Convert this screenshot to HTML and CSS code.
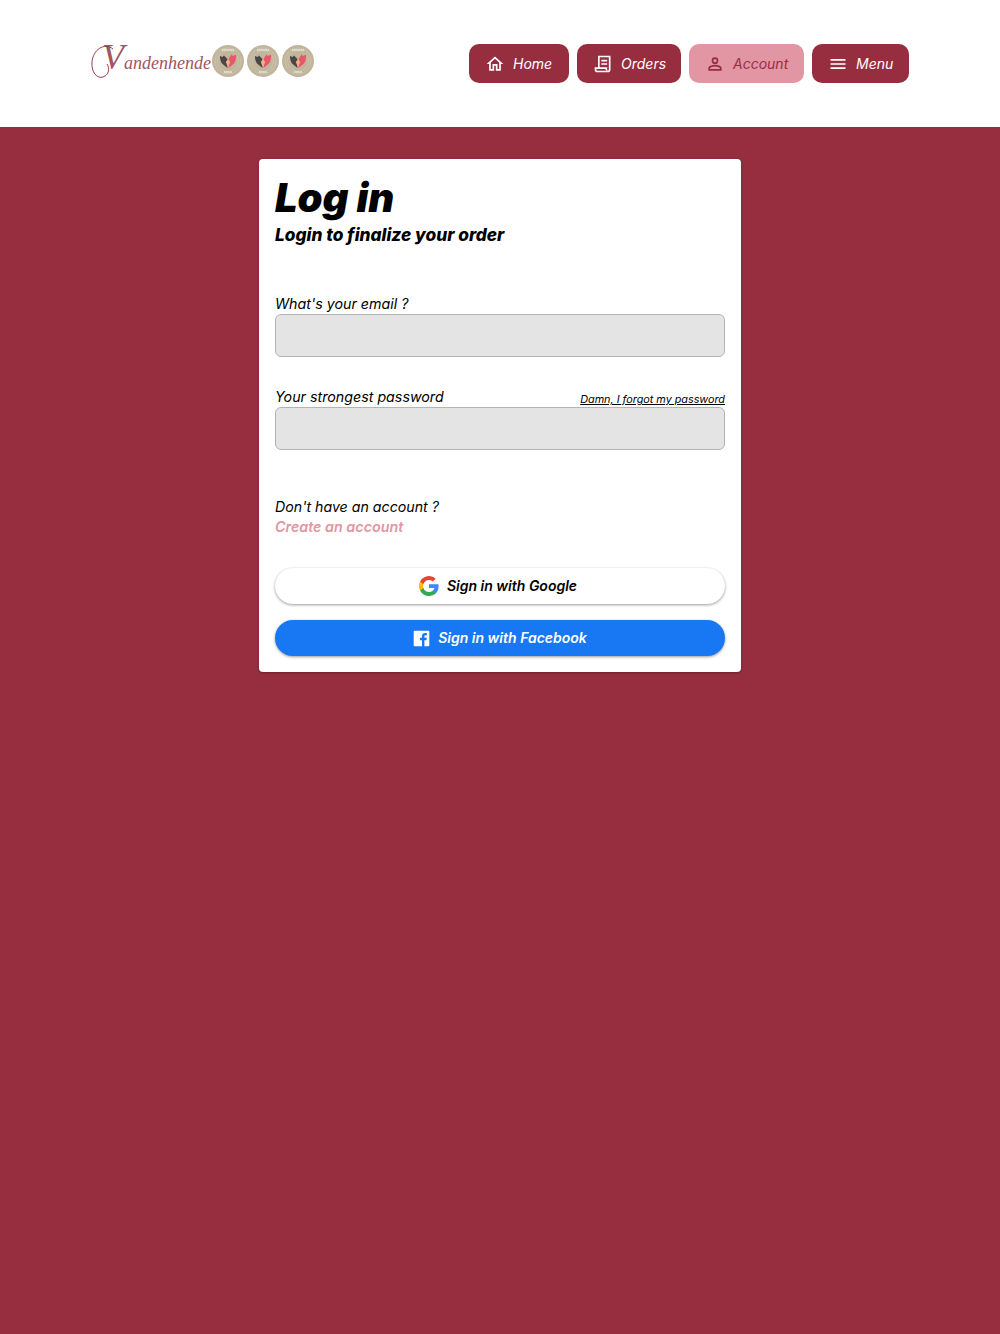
FILE: index.html
```html
<!DOCTYPE html>
<html lang="en">

<head>
    <meta charset="UTF-8">
    <meta name="viewport" content="width=device-width, initial-scale=1.0">
    <title>Log in - Vandenhende</title>
    <link rel="stylesheet" href="styles.css">
</head>

<body>

    <svg class="defs">
        <defs>
            <symbol id="seal" viewBox="0 0 32 32">
                <circle cx="16" cy="16" r="16" fill="#c1b59c" />
                <circle cx="16" cy="16" r="13" fill="none" stroke="#d0c7b2" stroke-width=".7" />
                <circle cx="16" cy="16" r="10.500" fill="none" stroke="#d0c7b2" stroke-width=".7" />
                <path d="M10 5h12M12 27h8" stroke="#e6e0d3" stroke-width="2" stroke-dasharray="1.500 .6" />
                <path d="M15.500 23 10 18.500C8.500 16.500 8 13.500 8 11l2.500 1 1.500-1.500 3.500 3.500z" fill="#4a4648" />
                <path d="M16.500 23 22 18.500C23.500 16.500 24.500 12.500 24 9.500l-3 1.500-1.500-1.500-3 4.500z" fill="#e8586b" />
                <path d="M16 22.500 13.800 17 16 14l2.200 3z" fill="#efb27d" />
            </symbol>
        </defs>
    </svg>

    <header class="top-bar">
        <a class="logo" href="#">
            <svg class="logo-swash" viewBox="0 0 40 36">
                <path d="M22 5C13-2 2 6 1 18c-1 10 5 17 11 15 6-2 7-9 4-13" fill="none" stroke="#96404e" />
            </svg>
            <span class="logo-name"><span class="logo-v">V</span>andenhende</span>
            <span class="seals">
                <svg class="seal"><use href="#seal" /></svg>
                <svg class="seal"><use href="#seal" /></svg>
                <svg class="seal"><use href="#seal" /></svg>
            </span>
        </a>
        <nav class="nav">
            <a class="nav-btn nav-home" href="#">
                <svg class="nav-icon" viewBox="0 0 24 24"><path d="M12 5.700 17 10.200V18h-2v-6H9v6H7v-7.800zM12 3 2 12h3v8h6v-6h2v6h6v-8h3z" /></svg>
                Home
            </a>
            <a class="nav-btn nav-orders" href="#">
                <svg class="nav-icon" viewBox="0 0 24 24"><path fill-rule="evenodd" d="M6 2h15v16.500A3.500 3.500 0 0 1 17.500 22h-12A3.500 3.500 0 0 1 2 18.500V16h4zm2 2v12h9v2.500c0 .5.100 1 .4 1.500H5.500A1.500 1.500 0 0 1 4 18.500V18h11v-2H8zm0 0zm9 0H8v12h7v2.500a2.500 2.500 0 0 0 3 1.400c.7-.3 1-.8 1-1.400V4zM10 7h7v2h-7zm0 4h7v2h-7z" /></svg>
                Orders
            </a>
            <a class="nav-btn nav-btn-active nav-account" href="#">
                <svg class="nav-icon" viewBox="0 0 24 24"><path d="M12 6a2 2 0 1 1 0 4 2 2 0 0 1 0-4m0 9c2.700 0 5.800 1.300 6 2v1H6v-1c.2-.7 3.300-2 6-2M12 4a4 4 0 1 0 0 8 4 4 0 0 0 0-8m0 9c-2.700 0-8 1.300-8 4v3h16v-3c0-2.700-5.300-4-8-4" /></svg>
                Account
            </a>
            <a class="nav-btn nav-menu" href="#">
                <svg class="nav-icon" viewBox="0 0 24 24"><path d="M3 18h18v-2H3zm0-5h18v-2H3zm0-7v2h18V6z" /></svg>
                Menu
            </a>
        </nav>
    </header>

    <main class="page">
        <form class="card">
            <h1>Log in</h1>
            <h2>Login to finalize your order</h2>

            <div class="field field-email">
                <label for="email">What's your email ?</label>
                <input type="email" id="email">
            </div>

            <div class="field field-password">
                <div class="label-row">
                    <label for="password">Your strongest password</label>
                    <a class="forgot" href="#">Damn, I forgot my password</a>
                </div>
                <input type="password" id="password">
            </div>

            <p class="no-account">Don't have an account ?</p>
            <a class="create" href="#">Create an account</a>

            <button type="button" class="social google">
                <svg class="social-icon" viewBox="0 0 24 24">
                    <path fill="#4285F4" d="M23.500 12.300c0-.8-.1-1.600-.2-2.300H12v4.500h6.500a5.500 5.500 0 0 1-2.400 3.600v3h3.900c2.200-2.100 3.500-5.200 3.500-8.800" />
                    <path fill="#34A853" d="M12 24c3.200 0 6-1.100 8-2.900l-3.900-3c-1.100.7-2.500 1.200-4.100 1.200-3.100 0-5.800-2.100-6.700-5H1.300v3.100A12 12 0 0 0 12 24" />
                    <path fill="#FBBC05" d="M5.300 14.300a7 7 0 0 1 0-4.600V6.600h-4a12 12 0 0 0 0 10.800z" />
                    <path fill="#EA4335" d="M12 4.800c1.800 0 3.300.6 4.600 1.800l3.400-3.400A12 12 0 0 0 1.300 6.600l4 3.100c.9-2.800 3.600-4.900 6.700-4.900" />
                </svg>
                <span>Sign in with Google</span>
            </button>
            <button type="button" class="social facebook">
                <svg class="social-icon" viewBox="0 0 24 24"><path fill="#fff" d="M22 1H2a1 1 0 0 0-1 1v20a1 1 0 0 0 1 1h10.700v-8.500H9.800v-3.400h2.900V8.600c0-2.900 1.800-4.400 4.300-4.400 1.200 0 2.300.1 2.600.1v3h-1.800c-1.400 0-1.700.7-1.700 1.600v2.200h3.400l-.5 3.400h-2.900V23H22a1 1 0 0 0 1-1V2a1 1 0 0 0-1-1" /></svg>
                <span>Sign in with Facebook</span>
            </button>
        </form>
    </main>

</body>

</html>
```

FILE: styles.css
```css
* {
    box-sizing: border-box;
}

html,
body {
    margin: 0;
    min-height: 100%;
}

body {
    min-height: 1334px;
    background-color: #962e40;
    font-family: "Inter", "Open Sans", sans-serif;
    font-style: italic;
    color: #000;
}

a {
    text-decoration: none;
}

.defs {
    display: none;
}

.top-bar {
    height: 127px;
    background: white;
    padding: 44px 91px 0;
    display: flex;
    justify-content: space-between;
    align-items: flex-start;
}

.logo {
    position: relative;
    display: flex;
    align-items: center;
    height: 34px;
    color: #a2555f;
}

.logo-swash {
    position: absolute;
    left: 0;
    top: 0;
    width: 40px;
    height: 36px;
}

.logo-name {
    width: 121px;
    padding-left: 11px;
    font-family: "Liberation Serif", serif;
    font-size: 18px;
    line-height: 34px;
    white-space: nowrap;
}

.logo-v {
    font-size: 36px;
    line-height: 30px;
    margin-right: 0;
}

.seals {
    display: flex;
    gap: 3px;
}

.seal {
    width: 32px;
    height: 32px;
}

.nav {
    display: flex;
    gap: 8px;
}

.nav-btn {
    height: 39px;
    padding: 0 0 0 16px;
    display: flex;
    align-items: center;
    gap: 8px;
    background-color: #962e40;
    color: white;
    border-radius: 10px;
    font-size: 14px;
}

.nav-home {
    width: 100px;
}

.nav-orders {
    width: 104px;
}

.nav-account {
    width: 115px;
}

.nav-menu {
    width: 97px;
}

.nav-btn-active {
    background-color: #e295a2;
    color: #962e40;
}

.nav-icon {
    width: 20px;
    height: 20px;
    fill: currentColor;
    flex: none;
}

.page {
    display: flex;
    justify-content: center;
    padding-top: 32px;
}

.card {
    width: 482px;
    height: 513px;
    padding: 16px;
    background: white;
    border-radius: 4px;
    box-shadow: 0 1px 3px rgba(0, 0, 0, 0.3);
}

h1 {
    margin: 0;
    font-size: 40px;
    line-height: 46px;
    font-weight: 900;
}

h2 {
    margin: 0;
    font-size: 17.300px;
    line-height: 28px;
    font-weight: 800;
}

.field label {
    display: block;
    font-size: 14.250px;
}

.field input {
    display: block;
    width: 100%;
    height: 43px;
    background-color: #e4e4e4;
    border: 1.500px solid #b4b4b4;
    border-radius: 6px;
}

.field-email {
    margin-top: 45px;
}

.field-email label {
    line-height: 20px;
}

.field-password {
    margin-top: 32px;
}

.field-password label {
    line-height: 18px;
    padding-bottom: 1px;
}

.label-row {
    display: flex;
    justify-content: space-between;
    align-items: flex-end;
    height: 18px;
}

.forgot {
    font-size: 10.800px;
    line-height: 16px;
    margin-bottom: -1px;
    color: #000;
    text-decoration: underline;
}

.no-account {
    margin: 47px 0 0;
    font-size: 14.200px;
    line-height: 20px;
}

.create {
    display: block;
    font-size: 14.300px;
    line-height: 20px;
    font-weight: 600;
    color: #e295a2;
}

.social {
    display: flex;
    align-items: center;
    justify-content: center;
    gap: 8px;
    width: 100%;
    height: 36px;
    border: none;
    border-radius: 18px;
    font-family: inherit;
    font-style: italic;
    font-size: 14px;
    font-weight: 600;
    box-shadow: 0 1px 3px rgba(0, 0, 0, 0.4);
    cursor: pointer;
}

.social span {
    position: relative;
    top: -1px;
}

.google {
    margin-top: 31px;
    padding-right: 10px;
    background: white;
    color: #000;
}

.facebook {
    margin-top: 16px;
    background-color: #1877f2;
    color: white;
}

.social-icon {
    width: 20px;
    height: 20px;
    flex: none;
}

.facebook .social-icon {
    width: 17px;
    height: 17px;
}
```
